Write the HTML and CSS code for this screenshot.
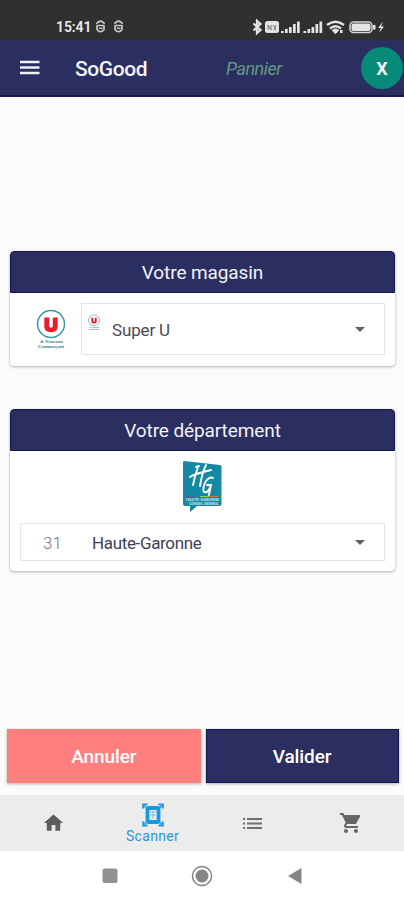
FILE: index.html
```
<!DOCTYPE html>
<html lang="fr">
<head>
<meta charset="utf-8">
<title>SoGood</title>
<link rel="stylesheet" href="styles.css">
</head>
<body>
<div class="status">
  <span class="time">15:41</span>
  <svg class="notif" width="30" height="14" viewBox="0 0 30 14" fill="none" stroke="#c8c8c8" stroke-width="1.700"><g id="face"><path d="M2 4V3Q5.500 -.5 9 3V4M1.500 5.500H9.500M2 5.500V9.500Q5.500 14 9 9.500V5.500"/><path d="M4 8.300H7.500" stroke-width="1.500"/></g><use href="#face" x="18"/></svg>
  <svg class="signals" width="136" height="18" viewBox="0 0 136 18" fill="#e4e4e4">
    <path d="M1.500 5.500L8.500 12L5 15V3L8.500 6L1.500 12.500" fill="none" stroke="#e4e4e4" stroke-width="2.200"/>
    <rect x="13" y="3" width="14" height="12" rx="2.500"/>
    <path d="M16 12V7l3 5V7M21 7l3 5M24 7l-2 5" stroke="#777" fill="none"/>
    <g id="bars"><path d="M29 13h2.700v2H29zM33 11h2.700v4H33zM37 9h2.700v6H37zM41 6h2.700v9H41zM45 3.500h2.700V15H45z"/></g>
    <use href="#bars" x="22.500"/>
    <g fill="none" stroke="#e4e4e4" stroke-width="2.400"><path d="M75 7Q83.500 .5 92 7M78 10.500Q83.500 6 89 10.500"/><path d="M81.500 12.500Q83.500 11 85.500 12.500L83.500 14.500Z"/></g>
    <path d="M88 12h2.500v3H88z"/>
    <rect x="98" y="4" width="22" height="10.500" rx="3.500" fill="none" stroke="#d5d5d5" stroke-width="1.500"/><rect x="99.500" y="5.500" width="19" height="7.500" rx="2"/><path d="M121 7h2.500v4.500H121z"/>
    <path d="M131 3.500l-5 6.500h3l-2 5 5-6.500h-3z"/>
  </svg>
</div>
<header class="appbar">
  <svg class="menu" width="20" height="16" viewBox="0 0 20 16"><path d="M0 2h19.500M0 7.500h19.500M0 13h19.500" stroke="#f0f0f5" stroke-width="2.300"/></svg>
  <h1>SoGood</h1>
  <span class="basket">Pannier</span>
  <span class="avatar">X</span>
</header>
<main>
  <section class="card store">
    <h2>Votre magasin</h2>
    <div class="row">
      <svg class="ulogo" width="30" height="41" viewBox="0 0 30 41">
        <g id="u"><circle cx="15" cy="15" r="13.500" fill="#fff" stroke="#399a9d" stroke-width="1.500"/><path d="M8.300 8.500h4.900v8.200q0 2 1.800 2t1.800-2V8.500h4.900v9q0 5.700-6.700 5.700t-6.700-5.700z" fill="#ed1c2b"/>
        <text x="4" y="34" textLength="23" class="motto">&amp; Nouveau</text><text x="2" y="38.500" textLength="26" class="motto">Commerçant</text></g>
      </svg>
      <div class="select">
        <svg class="tiny" width="12" height="17" viewBox="0 0 30 41"><use href="#u"/></svg>
        <span class="value">Super U</span><i class="arrow"></i>
      </div>
    </div>
  </section>
  <section class="card dept">
    <h2>Votre département</h2>
    <svg class="hg" width="40" height="52" viewBox="0 0 40 52">
      <path d="M2 0L38 4Q39.500 4 39.500 6V43Q39.500 45 37.500 45H15L8 51V45H3Q1 45 1 43V2Q1 0 2 0Z" fill="#1489a1"/>
      <g fill="none" stroke="#fff" stroke-width="1.900" stroke-linecap="round"><path d="M16 6Q13 14 11 24M24 4Q20 12 18 25M8 16Q12 13 29 9M14 6L17 5"/><path d="M31 17Q28 15 24 20Q20 27 22 31Q26 33 29 24H25M29 24L27 34"/></g>
      <path d="M4 35.500h9" stroke="#694b98"/><path d="M18 35.500h9" stroke="#a9c832"/><path d="M27 35.500h9" stroke="#d37442"/>
      <text x="4" y="40" textLength="33" lengthAdjust="spacingAndGlyphs" class="region">HAUTE-GARONNE</text><text x="7" y="43.500" textLength="30" lengthAdjust="spacingAndGlyphs" class="region">CONSEIL GENERAL</text>
    </svg>
    <div class="select"><span class="code">31</span><span class="value">Haute-Garonne</span><i class="arrow"></i></div>
  </section>
  <div class="actions"><button class="cancel">Annuler</button><button class="confirm">Valider</button></div>
</main>
<nav class="tabs">
  <a><svg width="23" height="24" viewBox="0 0 24 24" fill="#5c5c5c"><path d="M10 20v-6h4v6h5v-8h3L12 3 2 12h3v8z"/></svg></a>
  <a class="active"><svg width="24" height="24" viewBox="0 0 24 24" fill="none" stroke="#1998df"><path d="M2.200 5.500V1.500H6.500M17.500 1.500h4.300V5.500M2.200 18.500v4H6.500M17.500 22.500h4.300V18.500" stroke-width="2"/><path d="M3 2.500L5.500 5M21 2.500L18.500 5M3 21.500L5.500 19M21 21.500L18.500 19" stroke-width="1.200"/><rect x="6.500" y="5" width="11" height="14" rx="1" stroke-width="3.800"/><path d="M9 9h6M12 8v8M9 12h6" stroke-width=".5"/></svg><span>Scanner</span></a>
  <a><svg class="list" width="20" height="14" viewBox="0 0 20 14" stroke="#707070" stroke-width="2"><path d="M0 2h2M0 6.500h2M0 11h2M4 2h15M4 6.500h15M4 11h15"/></svg></a>
  <a><svg width="24" height="24" viewBox="0 0 24 24" fill="#666"><path d="M5 4h15a1 1 0 0 1 .9 1.500L17.300 12q-.5 1-1.800 1H8.500z"/><path d="M7 18c-1.100 0-2 .9-2 2s.9 2 2 2 2-.9 2-2-.9-2-2-2zM1 2v2h2l3.600 7.590-1.350 2.450c-.16.280-.25.610-.25.960 0 1.100.9 2 2 2h12v-2H7.420c-.14 0-.25-.11-.25-.25l.03-.12.900-1.630h7.450c.75 0 1.410-.41 1.750-1.030l3.580-6.490A1 1 0 0 0 20 4H5.210l-.94-2H1zm16 16c-1.100 0-2 .9-2 2s.9 2 2 2 2-.9 2-2-.9-2-2-2z"/></svg></a>
</nav>
<footer class="system">
  <svg width="16" height="16"><rect x=".5" y=".5" width="15" height="14.500" rx="2" fill="#919191"/></svg>
  <svg width="22" height="22"><circle cx="11" cy="11" r="9.500" fill="none" stroke="#858585" stroke-width="1.500"/><circle cx="11" cy="11" r="6.500" fill="#858585"/></svg>
  <svg width="16" height="18"><path d="M1 9L14.500 1v16z" fill="#858585"/></svg>
</footer>
</body>
</html>
```
FILE: styles.css
```
* { box-sizing: border-box; }
body { margin: 0; width: 404px; height: 900px; display: flex; flex-direction: column; font-family: Roboto, "Liberation Sans", sans-serif; background: #fbfbfb; overflow: hidden; }
h1, h2 { margin: 0; font-weight: 500; }
svg { display: block; flex: none; }
.status { height: 40px; flex: none; background: #303030; display: flex; align-items: flex-start; padding: 18px 0 0 56px; color: #ededed; }
.time { font-size: 14px; line-height: 18px; font-weight: 600; width: 39px; letter-spacing: -.1px; }
.notif { margin-top: 2px; }
.signals { margin-left: 127px; }
.appbar { height: 57px; flex: none; background: #2b2e60; border-bottom: 2px solid #191950; display: flex; align-items: center; padding-left: 20px; padding-right: 1px; color: #f4f4f8; }
.menu { margin-top: 1px; }
h1 { margin-left: 35px; font-size: 21px; letter-spacing: -.4px; width: 151px; line-height: 30px; margin-top: 3px; }
.basket { font-style: italic; font-size: 18px; letter-spacing: -.5px; color: #629a85; margin-top: 2px; }
.avatar { margin-left: auto; width: 42px; height: 42px; border-radius: 50%; background: #078a79; display: grid; place-items: center; font-size: 18px; font-weight: 700; margin-top: 1px; }
main { height: 698px; flex: none; display: flex; flex-direction: column; padding: 154px 9px 0 10px; }
.card { background: #fff; border-radius: 4px; box-shadow: 0 1px 3px rgba(0,0,0,.3); flex: none; overflow: hidden; }
.card h2 { height: 42px; background: #2b2e60; border: 1.5px solid #17174f; border-radius: 4px 4px 0 0; color: #f3f3f7; font-weight: 400; font-size: 19px; letter-spacing: -.1px; line-height: 42px; text-align: center; }
.store { height: 115px; }
.row { display: flex; padding: 10px 10px 0 26px; }
.ulogo { margin-top: 6px; }
.select { border: 1px solid #e5e5e5; display: flex; align-items: center; color: #4a4a57; font-size: 17px; }
.row .select { height: 52px; flex: 1; margin-left: 15px; }
.tiny { margin: -13px 0 0 6px; }
.row .value { margin-left: 12px; margin-top: 1px; letter-spacing: -.15px; }
.arrow { margin-left: auto; margin-right: 19px; border: 5px solid transparent; border-top-color: #606060; border-bottom: 0; }
.motto { font: italic 700 5px "Liberation Serif", serif; fill: #387b8c; }
.region { font: 700 3.5px Roboto, sans-serif; fill: #c0e1e7; }
.dept { height: 162px; margin-top: 43px; }
.hg { margin: 10px 0 0 172px; }
.dept .select { height: 38px; margin: 10px 10px 0; }
.code { margin-left: 22px; width: 49px; color: #777; font-weight: 300; margin-top: 1px; }
.dept .value { color: #3e3e53; letter-spacing: -.35px; margin-top: 1px; }
.actions { display: grid; grid-template-columns: 193.5px 193px; gap: 5px; height: 54px; margin: 158px -4px 0 -3px; flex: none; }
.actions button { border: 0; font: 500 19px Roboto, sans-serif; letter-spacing: -.1px; color: #fff; box-shadow: 0 1px 3px rgba(0,0,0,.3); padding: 0; }
.actions .cancel { background: #ff7f7e; }
.actions .confirm { background: #2b2e60; border: 1.5px solid #121250; }
.tabs { height: 56px; flex: none; background: #ececec; display: flex; padding: 0 4px; }
.tabs a { width: 99px; display: flex; flex-direction: column; align-items: center; justify-content: center; }
.tabs .active { color: #2697d5; font-size: 14px; letter-spacing: .3px; justify-content: flex-start; padding-top: 8px; }
.tabs .active span { line-height: 16px; margin-top: 1px; }
.list { margin: 1px 0 0 2px; }
.system { flex: 1; background: #fff; display: flex; align-items: center; padding: 0 0 0 102px; }
.system svg + svg { margin-left: 73px; }
.system svg:last-child { margin-left: 74px; }
```
